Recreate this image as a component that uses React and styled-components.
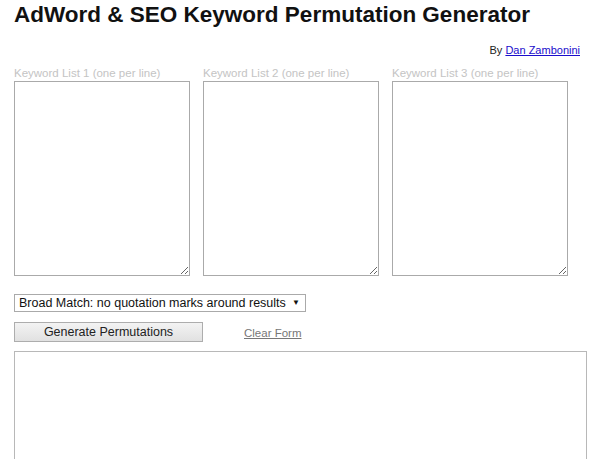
import React from "react";
import styled, { createGlobalStyle } from "styled-components";

const GlobalStyle = createGlobalStyle`
  html, body {
    margin: 0;
    padding: 0;
    background: #fff;
    font-family: "Liberation Sans", Arial, sans-serif;
    overflow: hidden;
  }
`;

const App = () => {
  return (
    <>
      <GlobalStyle />
      <Page>
        <Title>AdWord &amp; SEO Keyword Permutation Generator</Title>
        <Byline>
          By <a href="#">Dan Zambonini</a>
        </Byline>
        <Lists>
          {[1, 2, 3].map((n) => (
            <ListColumn key={n}>
              <Label>Keyword List {n} (one per line)</Label>
              <ListBox />
            </ListColumn>
          ))}
        </Lists>
        <SelectWrap>
          <MatchSelect defaultValue="broad">
            <option value="broad">Broad Match: no quotation marks around results</option>
            <option value="phrase">Phrase Match: quotation marks around results</option>
            <option value="exact">Exact Match: square brackets around results</option>
          </MatchSelect>
        </SelectWrap>
        <Actions>
          <GenerateButton>Generate Permutations</GenerateButton>
          <ClearLink href="#">Clear Form</ClearLink>
        </Actions>
        <Output />
      </Page>
    </>
  );
};

const Page = styled.div`
  padding: 0 13px 0 14px;
  width: 600px;
  height: 459px;
  box-sizing: border-box;
  overflow: hidden;
`;

const Title = styled.h1`
  margin: 0;
  padding-top: 3px;
  font-size: 22.5px;
  line-height: 24px;
  font-weight: 700;
  color: #111;
`;

const Byline = styled.div`
  margin-top: 17px;
  padding-right: 7px;
  text-align: right;
  font-size: 11px;
  line-height: 13px;
  color: #222;

  a {
    color: #1a0dcc;
    text-decoration: underline;
  }
`;

const Lists = styled.div`
  display: flex;
  gap: 13px;
  margin-top: 10px;
`;

const ListColumn = styled.div`
  display: flex;
  flex-direction: column;
`;

const Label = styled.label`
  font-size: 11.5px;
  line-height: 13px;
  color: #c4c4c4;
  margin-bottom: 1px;
`;

const ListBox = styled.textarea`
  width: 176px;
  height: 195px;
  box-sizing: border-box;
  border: 1px solid #aaa;
  margin: 0;
  resize: both;
  font-family: "Liberation Sans", Arial, sans-serif;
`;

const SelectWrap = styled.div`
  position: relative;
  width: 292px;
  margin-top: 17px;

  &::after {
    content: "▼";
    position: absolute;
    right: 6px;
    top: 5px;
    font-size: 8px;
    color: #111;
    pointer-events: none;
  }
`;

const MatchSelect = styled.select`
  appearance: none;
  width: 100%;
  height: 18px;
  box-sizing: border-box;
  border: 1px solid #aaa;
  border-radius: 0;
  background: #fff;
  padding: 0 0 0 4px;
  font-family: "Liberation Sans", Arial, sans-serif;
  font-size: 12.5px;
  color: #111;
`;

const Actions = styled.div`
  display: flex;
  align-items: center;
  margin-top: 10px;
`;

const GenerateButton = styled.button`
  width: 189px;
  height: 20px;
  box-sizing: border-box;
  border: 1px solid #adadad;
  border-radius: 0;
  background: linear-gradient(#f3f3f3, #e1e1e1);
  font-family: "Liberation Sans", Arial, sans-serif;
  font-size: 12.5px;
  color: #222;
  padding: 0;
`;

const ClearLink = styled.a`
  margin-left: 41px;
  margin-top: 2px;
  font-size: 11.5px;
  color: #777;
  text-decoration: underline;
`;

const Output = styled.textarea`
  display: block;
  margin: 9px 0 0;
  width: 573px;
  height: 140px;
  box-sizing: border-box;
  border: 1px solid #b8b8b8;
  resize: none;
`;

export default App;
